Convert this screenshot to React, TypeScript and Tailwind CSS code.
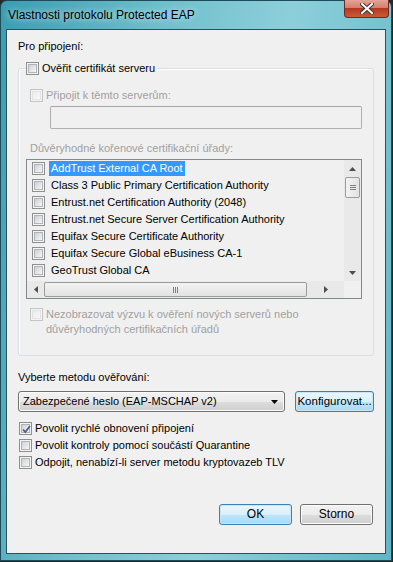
import clsx from "clsx";

const certs = [
  "AddTrust External CA Root",
  "Class 3 Public Primary Certification Authority",
  "Entrust.net Certification Authority (2048)",
  "Entrust.net Secure Server Certification Authority",
  "Equifax Secure Certificate Authority",
  "Equifax Secure Global eBusiness CA-1",
  "GeoTrust Global CA",
];

function Check({ checked, disabled }: { checked?: boolean; disabled?: boolean }) {
  return (
    <span
      className={clsx(
        "relative flex h-[13px] w-[13px] shrink-0 items-center justify-center border bg-[#f4f4f4]",
        disabled ? "border-[#c4c4c4]" : "border-[#8e8f8f]"
      )}
    >
      <span
        className={clsx(
          "h-[9px] w-[9px] border",
          disabled
            ? "border-[#e3e3e3] bg-gradient-to-br from-[#ececec] to-[#f8f8f8]"
            : "border-[#b0b4b9] bg-gradient-to-br from-[#cdd0d4] to-[#f7f7f7]"
        )}
      />
      {checked && (
        <svg className="absolute left-[1px] top-[1px]" width="11" height="11" viewBox="0 0 11 11">
          <path d="M2 5.5 L4.3 8 L9 2" fill="none" stroke="#4a5f97" strokeWidth="1.8" />
        </svg>
      )}
    </span>
  );
}

function Arrow({ dir, color = "#4d4d4d" }: { dir: "up" | "down" | "left" | "right"; color?: string }) {
  const d = {
    up: "M0 4 L3.5 0 L7 4 Z",
    down: "M0 0 L7 0 L3.5 4 Z",
    left: "M4 0 L4 7 L0 3.5 Z",
    right: "M0 0 L0 7 L4 3.5 Z",
  }[dir];
  const vert = dir === "up" || dir === "down";
  return (
    <svg width={vert ? 7 : 4} height={vert ? 4 : 7} viewBox={vert ? "0 0 7 4" : "0 0 4 7"}>
      <path d={d} fill={color} />
    </svg>
  );
}

function VButton({ label, blue, wide }: { label: string; blue?: boolean; wide?: boolean }) {
  return (
    <div
      className={clsx(
        "flex h-[21px] items-center justify-center rounded-[3px] border text-black",
        wide ? "w-[79px] text-[11.5px]" : "w-[73px] text-[12px]",
        blue
          ? "border-[#3c7fb1] bg-[linear-gradient(#eaf6fd_0%,#d9f0fc_50%,#bee6fd_51%,#a7d9f5_100%)] shadow-[inset_0_0_0_1px_#c9e6f6]"
          : "border-[#707070] bg-[linear-gradient(#f2f2f2_0%,#ebebeb_50%,#dddddd_51%,#cfcfcf_100%)] shadow-[inset_0_0_0_1px_#fcfcfc]"
      )}
    >
      {label}
    </div>
  );
}

export default function App() {
  return (
    <div className="h-[562px] w-[393px] bg-[#1f2a2b] font-['Liberation_Sans',Arial,sans-serif] text-[11px] leading-[15px] text-black">
      <div className="relative flex h-[561px] w-[392px] flex-col rounded-t-[7px] border border-[#1d4c58] bg-[linear-gradient(100deg,#3a9db2_0%,#72c0cd_35%,#8ccfda_60%,#5fb6c6_100%)] px-[5px] pb-[6px]">
        {/* title bar */}
        <div className="flex h-[28px] items-center pl-[2px] text-[12px] text-black [text-shadow:0_0_6px_#e8f7fa]">
          Vlastnosti protokolu Protected EAP
        </div>
        <div className="absolute right-[2px] top-[-1px] flex h-[18px] w-[45px] items-center justify-center rounded-b-[4px] border border-t-0 border-[#6b2a22] bg-[linear-gradient(#e3a497_0%,#d2806d_45%,#b6391c_50%,#c95a3a_100%)]">
          <svg width="14" height="11" viewBox="0 0 14 11">
            <path d="M2 1 L12 10 M12 1 L2 10" stroke="#3a3a3a" strokeWidth="4" strokeLinecap="square" />
            <path d="M2 1 L12 10 M12 1 L2 10" stroke="#ffffff" strokeWidth="2" strokeLinecap="square" />
          </svg>
        </div>

        {/* client area */}
        <div className="flex h-[525px] w-[380px] flex-col border border-[#2b5058] bg-[#f0f0f0] px-[11px] pt-[9px]">
          <div>Pro připojení:</div>

          {/* group box */}
          <div className="relative mt-[14px] h-[288px] w-[356px] rounded-[3px] border border-[#d5dfe5] shadow-[inset_1px_1px_0_#ffffff]">
            <div className="absolute left-[7px] top-[-8px] flex items-center gap-[3px] bg-[#f0f0f0] pr-[2px]">
              <Check />
              <span>Ověřit certifikát serveru</span>
            </div>
            <div className="flex flex-col pl-[11px] pt-[19px]">
              <div className="flex items-center gap-[3px] text-[#a0a0a0]">
                <Check disabled />
                <span>Připojit k těmto serverům:</span>
              </div>
              <div className="ml-[20px] mt-[3px] h-[23px] w-[312px] rounded-[2px] border border-[#afafaf] border-t-[#a6a6a6] bg-[#f0f0f0]" />
              <div className="mt-[12px] text-[#a0a0a0]">Důvěryhodné kořenové certifikační úřady:</div>

              {/* list box */}
              <div className="-ml-[4px] mt-[3px] flex h-[140px] w-[336px] flex-col border border-[#828790] bg-[#f0f0f0]">
                <div className="flex h-[121px]">
                  <div className="flex w-[317px] flex-col overflow-hidden">
                    {certs.map((c, i) => (
                      <div key={c} className="flex h-[17px] items-center gap-[4px] whitespace-nowrap pl-[5px]">
                        <Check />
                        <span className={clsx("px-[2px]", i === 0 && "bg-[#3399ff] text-white")}>{c}</span>
                      </div>
                    ))}
                  </div>
                  {/* vertical scrollbar */}
                  <div className="flex w-[17px] flex-col items-center bg-[#e9e9e9]">
                    <div className="flex h-[17px] items-center justify-center">
                      <Arrow dir="up" />
                    </div>
                    <div className="flex h-[21px] w-[15px] flex-col items-center justify-center gap-[1px] rounded-[2px] border border-[#9b9b9b] bg-[linear-gradient(90deg,#f3f3f3,#e2e2e2)]">
                      <span className="h-[1px] w-[6px] bg-[#808080]" />
                      <span className="h-[1px] w-[6px] bg-[#808080]" />
                      <span className="h-[1px] w-[6px] bg-[#808080]" />
                    </div>
                    <div className="flex-1" />
                    <div className="flex h-[17px] items-center justify-center">
                      <Arrow dir="down" />
                    </div>
                  </div>
                </div>
                {/* horizontal scrollbar */}
                <div className="flex h-[17px]">
                  <div className="flex w-[317px] items-center bg-[#e9e9e9]">
                    <div className="flex w-[17px] items-center justify-center">
                      <Arrow dir="left" />
                    </div>
                    <div className="flex h-[15px] w-[263px] items-center justify-center gap-[1px] rounded-[2px] border border-[#9b9b9b] bg-[linear-gradient(#f3f3f3,#e2e2e2)]">
                      <span className="h-[6px] w-[1px] bg-[#808080]" />
                      <span className="h-[6px] w-[1px] bg-[#808080]" />
                      <span className="h-[6px] w-[1px] bg-[#808080]" />
                    </div>
                    <div className="flex flex-1 items-center justify-center">
                      <Arrow dir="right" />
                    </div>
                  </div>
                  <div className="w-[17px] bg-[#f0f0f0]" />
                </div>
              </div>

              <div className="mt-[9px] flex items-start gap-[3px] text-[#a0a0a0]">
                <Check disabled />
                <span className="-mt-[1px]">
                  Nezobrazovat výzvu k ověření nových serverů nebo
                  <br />
                  důvěryhodných certifikačních úřadů
                </span>
              </div>
            </div>
          </div>

          <div className="mt-[14px]">Vyberte metodu ověřování:</div>
          <div className="mt-[6px] flex items-center gap-[10px]">
            <div className="flex h-[21px] w-[267px] items-center justify-between rounded-[3px] border border-[#707070] bg-[linear-gradient(#f2f2f2_0%,#ebebeb_50%,#dddddd_51%,#cfcfcf_100%)] pl-[4px] pr-[6px] shadow-[inset_0_0_0_1px_#fcfcfc]">
              <span>Zabezpečené heslo (EAP-MSCHAP v2)</span>
              <Arrow dir="down" color="#000000" />
            </div>
            <VButton label="Konfigurovat..." blue wide />
          </div>

          <div className="mt-[8px] flex flex-col">
            <div className="flex h-[17px] items-center gap-[3px] pl-[1px]">
              <Check checked />
              <span>Povolit rychlé obnovení připojení</span>
            </div>
            <div className="flex h-[17px] items-center gap-[3px] pl-[1px]">
              <Check />
              <span>Povolit kontroly pomocí součástí Quarantine</span>
            </div>
            <div className="flex h-[17px] items-center gap-[3px] pl-[1px]">
              <Check />
              <span>Odpojit, nenabízí-li server metodu kryptovazeb TLV</span>
            </div>
          </div>

          <div className="mt-[33px] flex justify-end gap-[8px] pr-[1px]">
            <VButton label="OK" blue />
            <VButton label="Storno" />
          </div>
        </div>
      </div>
    </div>
  );
}
